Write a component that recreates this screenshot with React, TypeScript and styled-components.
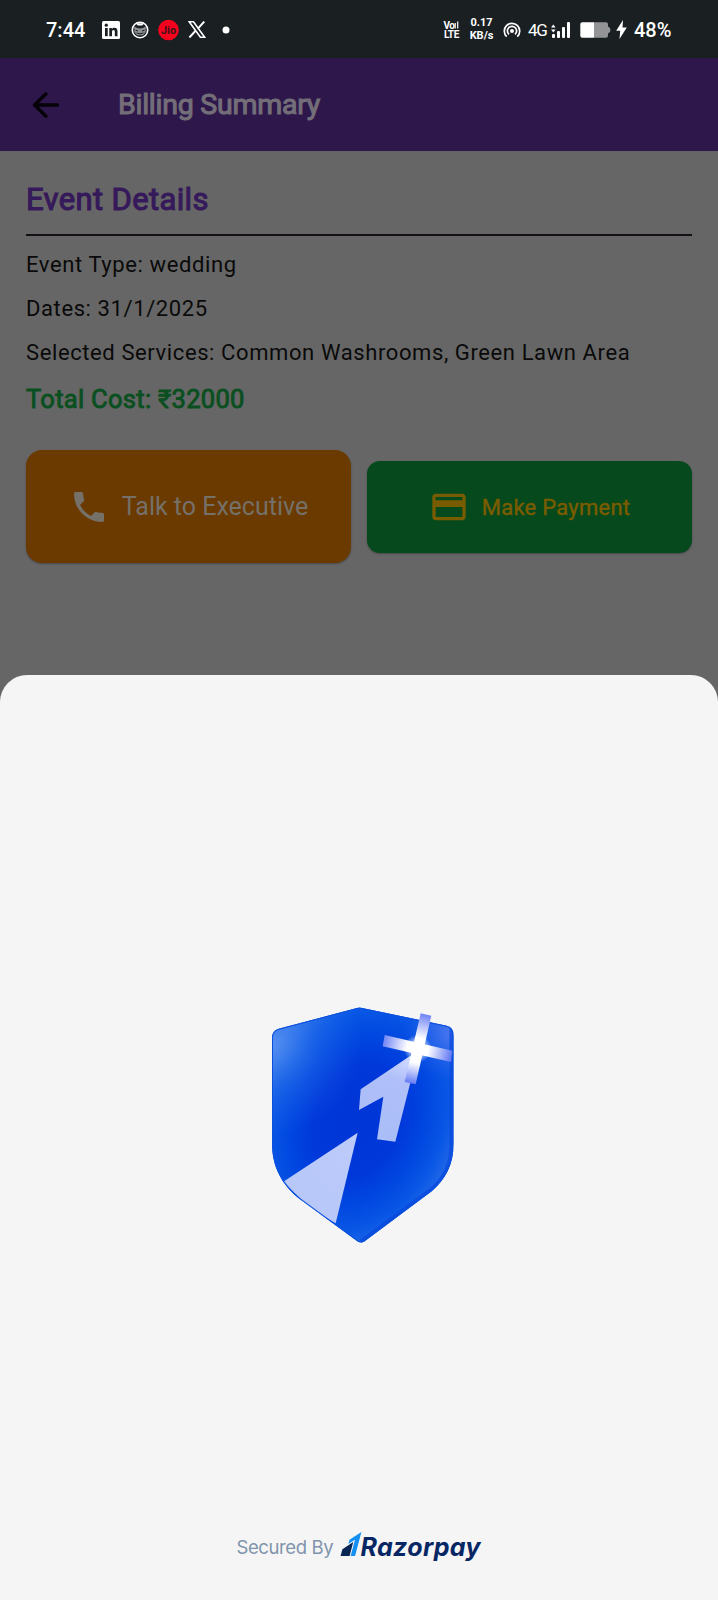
import React from 'react';
import styled, { createGlobalStyle } from 'styled-components';
import { MdPhone, MdCreditCard } from 'react-icons/md';

const GlobalStyle = createGlobalStyle`
  * { box-sizing: border-box; }
  body { margin: 0; background: #666; font-family: Roboto, "Noto Sans", sans-serif; }
  svg { display: block; flex: none; }
`;

const Screen = styled.div`
  position: relative;
  width: 718px;
  height: 1600px;
  overflow: hidden;
  background: #666666;
`;

const StatusBar = styled.header`
  display: flex;
  align-items: center;
  justify-content: space-between;
  height: 58px;
  padding: 1px 47px 0 46px;
  background: #1a1f22;
  color: #fff;
`;

const StatusGroup = styled.div`
  display: flex;
  align-items: center;
`;

const StatusText = styled.span<{ $width: number; $size?: number; $gap?: number; $weight?: number; $tracking?: number }>`
  width: ${(p) => p.$width}px;
  margin-left: ${(p) => p.$gap ?? 0}px;
  font-size: ${(p) => p.$size ?? 20}px;
  font-weight: ${(p) => p.$weight ?? 500};
  letter-spacing: ${(p) => p.$tracking ?? 0}px;
  line-height: 24px;
  white-space: nowrap;
`;

const StatusIcon = styled.span<{ $gap: number }>`
  display: flex;
  margin-left: ${(p) => p.$gap}px;
`;

const Stacked = styled.span<{ $gap: number; $width: number; $size: number }>`
  display: flex;
  flex-direction: column;
  align-items: center;
  width: ${(p) => p.$width}px;
  margin-left: ${(p) => p.$gap}px;
  font-size: ${(p) => p.$size}px;
  font-weight: 700;
  line-height: 12.5px;
  white-space: nowrap;
`;

const VoLine = styled.span`
  display: flex;
  align-items: center;
  height: 9px;
  font-size: 10px;
  line-height: 9px;
  letter-spacing: -0.5px;
`;

const LteLine = styled.span`
  height: 9px;
  line-height: 9px;
  letter-spacing: -0.3px;
`;

const AppBar = styled.div`
  display: flex;
  align-items: center;
  height: 93px;
  padding-left: 26px;
  background: #2d174b;
`;

const AppTitle = styled.h1`
  margin: 0 0 0 51px;
  font-size: 28.5px;
  font-weight: 400;
  line-height: 40px;
  letter-spacing: -0.25px;
  -webkit-text-stroke: 1.1px currentColor;
  color: #736e78;
`;

const Content = styled.main`
  display: flex;
  flex-direction: column;
  padding: 27px 26px 0;
`;

const SectionTitle = styled.h2`
  margin: 0;
  font-size: 31px;
  font-weight: 400;
  line-height: 44px;
  letter-spacing: 0.35px;
  -webkit-text-stroke: 1.1px currentColor;
  color: #36195a;
`;

const Divider = styled.hr`
  width: 100%;
  height: 2px;
  margin: 12px 0 7px;
  border: 0;
  background: #130f14;
`;

const DetailRow = styled.p`
  margin: 0;
  font-size: 22px;
  line-height: 44px;
  letter-spacing: 0.6px;
  white-space: nowrap;
  color: #0a0a0a;
`;

const TotalCost = styled.p`
  margin: 2px 0 0;
  font-size: 25.5px;
  font-weight: 400;
  line-height: 44px;
  letter-spacing: 0.3px;
  -webkit-text-stroke: 0.9px currentColor;
  color: #0a4f20;
`;

const Actions = styled.div`
  display: grid;
  grid-template-columns: 325px 325px;
  gap: 16px;
  align-items: center;
  margin-top: 29px;
`;

const ActionButton = styled.button<{ $tone: 'call' | 'pay' }>`
  display: flex;
  align-items: center;
  justify-content: center;
  gap: ${(p) => (p.$tone === 'call' ? 13 : 13)}px;
  height: ${(p) => (p.$tone === 'call' ? 113 : 92)}px;
  padding: 0;
  border: 0;
  border-radius: ${(p) => (p.$tone === 'call' ? 16 : 13)}px;
  background: ${(p) => (p.$tone === 'call' ? '#6b3a00' : '#06491c')};
  color: ${(p) => (p.$tone === 'call' ? '#757068' : '#7a5c00')};
  font-family: inherit;
  font-size: ${(p) => (p.$tone === 'call' ? 25 : 22)}px;
  font-weight: 400;
  letter-spacing: ${(p) => (p.$tone === 'call' ? 0 : 0.25)}px;
  -webkit-text-stroke: ${(p) => (p.$tone === 'call' ? 0 : 0.45)}px currentColor;
  white-space: nowrap;
  box-shadow: 0 1px 2px rgba(0, 0, 0, 0.3);
`;

const ButtonLabel = styled.span<{ $drop: number }>`
  padding-top: ${(p) => p.$drop}px;
`;

const Sheet = styled.section`
  position: absolute;
  left: 0;
  right: 0;
  top: 675px;
  bottom: 0;
  display: flex;
  flex-direction: column;
  align-items: center;
  justify-content: space-between;
  padding: 315px 0 33px;
  border-radius: 27px 27px 0 0;
  background: #f5f5f5;
`;

const ShieldFrame = styled.div`
  width: 230px;
  margin-left: 12px;
`;

const Footer = styled.footer`
  display: flex;
  align-items: center;
  width: 245px;
  height: 40px;
`;

const SecuredBy = styled.span`
  width: 102px;
  font-family: Inter, sans-serif;
  font-size: 18.5px;
  font-weight: 400;
  line-height: 24px;
  letter-spacing: -0.4px;
  white-space: nowrap;
  color: #7f94ac;
`;

const MarkFrame = styled.span`
  display: flex;
  height: 30px;
`;

const BrandName = styled.span`
  margin-left: -2px;
  font-family: Inter, sans-serif;
  font-size: 25px;
  font-style: italic;
  font-weight: 700;
  line-height: 30px;
  letter-spacing: 0.35px;
  white-space: nowrap;
  color: #072664;
`;

const LinkedInIcon = () => (
  <svg width="18" height="18" viewBox="0 0 18 18">
    <rect width="18" height="18" rx="1.5" fill="#fff" />
    <g fill="#1a1f22">
      <circle cx="4.3" cy="4.2" r="1.6" />
      <rect x="3" y="7" width="2.7" height="8.2" />
      <path d="M7.3 7h2.6v1.2c.5-.9 1.4-1.4 2.6-1.4 2.2 0 3 1.500 3 3.700v4.700h-2.700v-4.200c0-1.200-.3-1.900-1.300-1.900s-1.500.7-1.500 1.900v4.200H7.300z" />
    </g>
  </svg>
);

const CatIcon = () => (
  <svg width="18" height="18" viewBox="0 0 18 18">
    <circle cx="9" cy="9" r="7.700" fill="none" stroke="#fff" strokeWidth="1.600" />
    <path d="M3.200 5.200 5.500 6.800Q9 8 12.500 6.800L14.800 5.200 14.600 11 12 14.200H6L3.400 11z" fill="#8d9193" />
    <path d="M4.500 9.200 7 10M13.500 9.200 11 10M5.500 12l3.500.8 3.500-.8" stroke="#1a1f22" strokeWidth="1" fill="none" />
    <path d="M4.800 2.200h8.400L11.200 4.600H6.800z" fill="#fff" />
  </svg>
);

const JioIcon = () => (
  <svg width="21" height="22" viewBox="0 0 21 22">
    <circle cx="10.500" cy="11" r="10.300" fill="#f5021f" />
    <text x="10.500" y="14.700" textAnchor="middle" fontFamily="Roboto, sans-serif" fontSize="10.800" fontWeight="700" fill="#3f1118">Jio</text>
  </svg>
);

const XIcon = () => (
  <svg width="18" height="17" viewBox="0 0 18 17">
    <path d="M1.200.8h4.300l11.200 15.400h-4.300z" fill="none" stroke="#fff" strokeWidth="1.600" />
    <path d="M16.300.5 9.900 7.600M7.800 9.500 1.400 16.500" stroke="#fff" strokeWidth="1.900" />
  </svg>
);

const HotspotIcon = () => (
  <svg width="18" height="16" viewBox="0 0 18 16" fill="none" stroke="#fff" strokeWidth="1.700">
    <circle cx="9" cy="9" r="2" fill="#fff" stroke="none" />
    <path d="M3.700 14.600A7.700 7.700 0 1 1 14.300 14.600" />
    <path d="M6 12.400A4.600 4.600 0 1 1 12 12.400" />
  </svg>
);

const SignalIcon = () => (
  <svg width="19" height="18" viewBox="0 0 19 18" fill="#fff">
    <path d="M0 6.500 2.300 3.400 4.600 6.500zM0 8.500h4.600L2.300 11.600z" />
    <rect x="1" y="13" width="3" height="4" rx="1" />
    <rect x="6" y="10" width="3" height="7" rx="1" />
    <rect x="11" y="6" width="3" height="11" rx="1" />
    <rect x="16" y="1" width="3" height="16" rx="1" />
  </svg>
);

const BatteryIcon = () => (
  <svg width="31" height="16" viewBox="0 0 31 16">
    <path d="M14 .3h12q2 0 2 2v2.200q2.500.6 2.500 3.500t-2.500 3.500v2.200q0 2-2 2H14z" fill="#929496" />
    <path d="M2.300.3H14v15.400H2.300q-2 0-2-2V2.300q0-2 2-2z" fill="#fff" />
  </svg>
);

const BoltIcon = () => (
  <svg width="11" height="19" viewBox="0 0 11 19">
    <path d="M7 0 .2 10.700h4L3.500 19 10.800 7.500H6.500z" fill="#fff" />
  </svg>
);

const BackIcon = () => (
  <svg width="41" height="40" viewBox="0 0 41 40" fill="none" stroke="#050208" strokeWidth="3.300" strokeLinecap="round" strokeLinejoin="round">
    <path d="M31.500 20H9M20 8.800 8.500 20 20 31.200" />
  </svg>
);

const ShieldLogo = () => (
  <svg width="230" height="270" viewBox="0 0 690 810">
    <defs>
      <radialGradient id="shieldFill" gradientUnits="userSpaceOnUse" cx="0" cy="0" r="1" gradientTransform="translate(325 390) rotate(22) scale(320 430)">
        <stop offset="0" stopColor="#0035d6" />
        <stop offset="0.4" stopColor="#0038da" />
        <stop offset="0.6" stopColor="#0046e0" />
        <stop offset="0.8" stopColor="#0957e5" />
        <stop offset="1" stopColor="#2a6eea" />
      </radialGradient>
      <radialGradient id="cornerGlow" gradientUnits="userSpaceOnUse" cx="65" cy="165" r="270">
        <stop offset="0" stopColor="#6aa0f4" stopOpacity="0.65" />
        <stop offset="0.5" stopColor="#4584ee" stopOpacity="0.25" />
        <stop offset="1" stopColor="#3477ec" stopOpacity="0" />
      </radialGradient>
      <radialGradient id="rightGlow" gradientUnits="userSpaceOnUse" cx="600" cy="130" r="140">
        <stop offset="0" stopColor="#5079f0" stopOpacity="0.8" />
        <stop offset="1" stopColor="#2f62ec" stopOpacity="0" />
      </radialGradient>
      <linearGradient id="boltFill" x1="0" y1="1" x2="1" y2="0">
        <stop offset="0" stopColor="#b6c6f7" />
        <stop offset="1" stopColor="#bccbfa" />
      </linearGradient>
      <linearGradient id="boltTip" gradientUnits="userSpaceOnUse" x1="400" y1="450" x2="490" y2="200">
        <stop offset="0" stopColor="#a9bdf6" />
        <stop offset="0.700" stopColor="#b0bff9" />
        <stop offset="1" stopColor="#d4dcff" />
      </linearGradient>
      <linearGradient id="rayV" gradientUnits="userSpaceOnUse" x1="528" y1="73" x2="480" y2="280">
        <stop offset="0" stopColor="#6f83f6" />
        <stop offset="0.350" stopColor="#fff" />
        <stop offset="0.700" stopColor="#fff" />
        <stop offset="1" stopColor="#6279f4" />
      </linearGradient>
      <linearGradient id="rayH" gradientUnits="userSpaceOnUse" x1="401" y1="152" x2="605" y2="199">
        <stop offset="0" stopColor="#7286f6" />
        <stop offset="0.350" stopColor="#fff" />
        <stop offset="0.650" stopColor="#fff" />
        <stop offset="1" stopColor="#5f77f3" />
      </linearGradient>
      <radialGradient id="sparkGlow" gradientUnits="userSpaceOnUse" cx="503" cy="176" r="42">
        <stop offset="0.4" stopColor="#fff" stopOpacity="0.8" />
        <stop offset="1" stopColor="#fff" stopOpacity="0" />
      </radialGradient>
      <clipPath id="shieldClip">
        <path d="M333 53 590 107Q611 112 611 137V460C611 525 586 568 545 604L344 754Q333 762 322 754L150 628C95 585 66 530 66 460V143Q66 122 86 116L318 55Q326 52 333 53z" />
      </clipPath>
    </defs>
    <g clipPath="url(#shieldClip)">
      <rect width="690" height="810" fill="url(#shieldFill)" />
      <rect width="690" height="810" fill="url(#cornerGlow)" />
      <rect width="690" height="810" fill="url(#rightGlow)" />
      <path d="M604 110V460C604 525 582 565 541 600L333 754" fill="none" stroke="#0645dc" strokeWidth="11" opacity="0.650" />
      <path d="M323 428 100 575 180 655 257 700z" fill="url(#boltFill)" />
      <path d="M333 53 590 107Q611 112 611 137V460C611 525 586 568 545 604L344 754Q333 762 322 754L150 628C95 585 66 530 66 460V143Q66 122 86 116L318 55Q326 52 333 53z" fill="none" stroke="#0a50dc" strokeWidth="6" />
    </g>
    <path d="M332 298 480 198 505 205 480 282 436 455 381 448 400 320 327 360z" fill="url(#boltTip)" />
    <circle cx="503" cy="176" r="42" fill="url(#sparkGlow)" />
    <path d="M404 135 607 182 603 216 398 169z" fill="url(#rayH)" />
    <path d="M512 70 544 77 497 283 464 276z" fill="url(#rayV)" />
  </svg>
);

const RazorpayMark = () => (
  <svg width="24" height="24" viewBox="0 0 24 24">
    <path d="M22.436 0 10.526 7.773 9.352 12.049 15.977 7.752 11.650 24h4.391z" fill="#1490f5" />
    <path d="M14.260 10.098 3.389 17.166 1.564 24h9.008z" fill="#072654" />
  </svg>
);

export default function App() {
  return (
    <Screen>
      <GlobalStyle />
      <StatusBar>
        <StatusGroup>
          <StatusText $width={39}>7:44</StatusText>
          <StatusIcon $gap={17}><LinkedInIcon /></StatusIcon>
          <StatusIcon $gap={11}><CatIcon /></StatusIcon>
          <StatusIcon $gap={9}><JioIcon /></StatusIcon>
          <StatusIcon $gap={9}><XIcon /></StatusIcon>
          <StatusIcon $gap={16}>
            <svg width="8" height="8" viewBox="0 0 8 8"><circle cx="4" cy="4" r="3.500" fill="#fff" /></svg>
          </StatusIcon>
        </StatusGroup>
        <StatusGroup>
          <Stacked $gap={0} $width={17} $size={10}>
            <VoLine>
              Vo
              <svg width="5" height="8" viewBox="0 0 5 8" fill="none" stroke="#fff" strokeWidth="1.200"><path d="M1.200 2v5.500M3.700.5v7" /></svg>
            </VoLine>
            <LteLine>LTE</LteLine>
          </Stacked>
          <Stacked $gap={9} $width={25} $size={11}>
            <span>0.17</span>
            <span>KB/s</span>
          </Stacked>
          <StatusIcon $gap={9}><HotspotIcon /></StatusIcon>
          <StatusText $gap={7} $width={18} $size={17} $weight={400} $tracking={-1.2}>4G</StatusText>
          <StatusIcon $gap={5}><SignalIcon /></StatusIcon>
          <StatusIcon $gap={10}><BatteryIcon /></StatusIcon>
          <StatusIcon $gap={5}><BoltIcon /></StatusIcon>
          <StatusText $gap={7} $width={37}>48%</StatusText>
        </StatusGroup>
      </StatusBar>

      <AppBar>
        <BackIcon />
        <AppTitle>Billing Summary</AppTitle>
      </AppBar>

      <Content>
        <SectionTitle>Event Details</SectionTitle>
        <Divider />
        <DetailRow>Event Type: wedding</DetailRow>
        <DetailRow>Dates: 31/1/2025</DetailRow>
        <DetailRow>Selected Services: Common Washrooms, Green Lawn Area</DetailRow>
        <TotalCost>Total Cost: ₹32000</TotalCost>
        <Actions>
          <ActionButton $tone="call">
            <MdPhone size={40} />
            <ButtonLabel $drop={0}>Talk to Executive</ButtonLabel>
          </ActionButton>
          <ActionButton $tone="pay">
            <MdCreditCard size={40} strokeWidth={0} />
            <ButtonLabel $drop={2}>Make Payment</ButtonLabel>
          </ActionButton>
        </Actions>
      </Content>

      <Sheet>
        <ShieldFrame><ShieldLogo /></ShieldFrame>
        <Footer>
          <SecuredBy>Secured By</SecuredBy>
          <MarkFrame><RazorpayMark /></MarkFrame>
          <BrandName>Razorpay</BrandName>
        </Footer>
      </Sheet>
    </Screen>
  );
}
